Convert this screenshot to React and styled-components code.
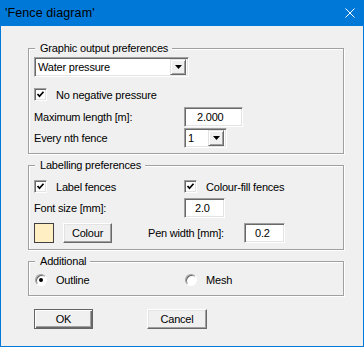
import React from "react";
import styled, { createGlobalStyle } from "styled-components";

const GlobalStyle = createGlobalStyle`
  html, body {
    margin: 0;
    padding: 0;
    background: #f0f0f0;
  }
  body {
    font-family: "Liberation Sans", Arial, sans-serif;
    font-size: 11px;
    letter-spacing: -0.2px;
    color: #000;
  }
`;

const Window = styled.div`
  box-sizing: border-box;
  width: 364px;
  height: 347px;
  background: #f0f0f0;
  border: 1px solid #0078d7;
  border-top: none;
  display: flex;
  flex-direction: column;
`;

const TitleBar = styled.div`
  height: 26px;
  flex: none;
  background: #0078d7;
  display: flex;
  align-items: center;
  justify-content: space-between;
  padding: 0 8px 0 4px;
`;

const Title = styled.span`
  font-size: 12.5px;
  letter-spacing: 0.1px;
  color: #000;
`;

const Body = styled.div`
  padding: 22px 19px 0 27px;
  display: flex;
  flex-direction: column;
`;

const Group = styled.section`
  border: 1px solid #a0a0a0;
  box-shadow: 1px 1px 0 #fff, inset 1px 1px 0 #fff;
  padding: 0 5px ${(p) => p.$pb}px;
  margin-top: ${(p) => p.$mt || 0}px;
  display: flex;
  flex-direction: column;
`;

const Caption = styled.div`
  width: fit-content;
  height: 13px;
  line-height: 13px;
  margin: -7px 0 0 1px;
  padding: 0 4px 0 5px;
  background: #f0f0f0;
`;

const Combo = styled.div`
  box-sizing: border-box;
  width: ${(p) => p.$w}px;
  height: 20px;
  margin-top: ${(p) => p.$mt || 0}px;
  background: #fff;
  border: 1px solid;
  border-color: #a0a0a0 #fff #fff #a0a0a0;
  box-shadow: inset 1px 1px 0 #696969, inset -1px -1px 0 #e3e3e3;
  padding: 2px 2px 2px 3px;
  display: flex;
  align-items: center;
  justify-content: space-between;
`;

const DropButton = styled.div`
  box-sizing: border-box;
  width: 16px;
  height: 16px;
  background: #f0f0f0;
  border: 1px solid;
  border-color: #e3e3e3 #696969 #696969 #e3e3e3;
  box-shadow: inset 1px 1px 0 #fff, inset -1px -1px 0 #a0a0a0;
  display: flex;
  align-items: center;
  justify-content: center;
`;

const Row = styled.div`
  display: grid;
  grid-template-columns: 150px auto;
  align-items: center;
  height: ${(p) => p.$h}px;
  margin-top: ${(p) => p.$mt}px;
`;

const Check = styled.label`
  display: flex;
  align-items: center;
  gap: 9px;
`;

const Box = styled.span`
  box-sizing: border-box;
  width: 13px;
  height: 13px;
  background: #fff;
  border: 1px solid;
  border-color: #a0a0a0 #fff #fff #a0a0a0;
  box-shadow: inset 1px 1px 0 #696969, inset -1px -1px 0 #e3e3e3;
  display: flex;
  align-items: center;
  justify-content: center;
`;

const Radio = styled.span`
  box-sizing: border-box;
  width: 12px;
  height: 12px;
  margin-left: 1px;
  border-radius: 50%;
  background: #fff;
  border: 1px solid;
  border-color: #a0a0a0 #fff #fff #a0a0a0;
  box-shadow: inset 1px 1px 0 #696969;
  display: flex;
  align-items: center;
  justify-content: center;
  &::after {
    content: "";
    width: 4px;
    height: 4px;
    border-radius: 50%;
    background: ${(p) => (p.$on ? "#000" : "transparent")};
  }
`;

const Input = styled.div`
  box-sizing: border-box;
  width: ${(p) => p.$w}px;
  height: 20px;
  background: #fff;
  border: 1px solid;
  border-color: #a0a0a0 #fff #fff #a0a0a0;
  box-shadow: inset 1px 1px 0 #696969, inset -1px -1px 0 #e3e3e3;
  padding-left: ${(p) => p.$pl || 10}px;
  display: flex;
  align-items: center;
`;

const ColourRow = styled.div`
  display: flex;
  align-items: center;
  height: 20px;
  margin-top: 5px;
`;

const Swatch = styled.span`
  box-sizing: border-box;
  width: 20px;
  height: 20px;
  background: #ffefc2;
  border: 1px solid #404040;
  margin-right: 9px;
`;

const PenLabel = styled.span`
  width: 96px;
  margin-left: 36px;
`;

const Button = styled.button`
  box-sizing: border-box;
  width: ${(p) => p.$w}px;
  height: 20px;
  padding: 0;
  font: inherit;
  letter-spacing: inherit;
  color: #000;
  background: #f0f0f0;
  border: 1px solid;
  border-color: ${(p) =>
    p.$default ? "#646464" : "#fff #696969 #696969 #fff"};
  box-shadow: ${(p) =>
    p.$default
      ? "inset 1px 1px 0 #fff, inset -1px -1px 0 #696969, inset -2px -2px 0 #a0a0a0"
      : "inset -1px -1px 0 #a0a0a0, inset 1px 1px 0 #e3e3e3"};
`;

const Buttons = styled.div`
  display: flex;
  gap: 54px;
  margin: 13px 0 0 6px;
`;

const Arrow = () => (
  <svg width="7" height="4" viewBox="0 0 7 4">
    <polygon points="0,0 7,0 3.5,4" fill="#000" />
  </svg>
);

const Tick = () => (
  <svg width="9" height="9" viewBox="0 0 9 9">
    <polyline
      points="1.5,4 3.5,6.3 7.5,1.8"
      fill="none"
      stroke="#000"
      strokeWidth="1.7"
    />
  </svg>
);

const CloseIcon = () => (
  <svg width="10" height="10" viewBox="0 0 10 10">
    <path d="M0.5 0.5L9.5 9.5M9.5 0.5L0.5 9.5" stroke="#fff" strokeWidth="1" />
  </svg>
);

export default function App() {
  return (
    <>
      <GlobalStyle />
      <Window>
        <TitleBar>
          <Title>'Fence diagram'</Title>
          <CloseIcon />
        </TitleBar>
        <Body>
          <Group $pb={5}>
            <Caption>Graphic output preferences</Caption>
            <Combo $w={155} $mt={2}>
              <span>Water pressure</span>
              <DropButton>
                <Arrow />
              </DropButton>
            </Combo>
            <Row $h={13} $mt={11}>
              <Check>
                <Box>
                  <Tick />
                </Box>
                No negative pressure
              </Check>
            </Row>
            <Row $h={20} $mt={6}>
              <span>Maximum length [m]:</span>
              <Input $w={59} $pl={12}>2.000</Input>
            </Row>
            <Row $h={20} $mt={1}>
              <span>Every nth fence</span>
              <Combo $w={43}>
                <span>1</span>
                <DropButton>
                  <Arrow />
                </DropButton>
              </Combo>
            </Row>
          </Group>

          <Group $mt={11} $pb={6}>
            <Caption>Labelling preferences</Caption>
            <Row $h={13} $mt={8}>
              <Check>
                <Box>
                  <Tick />
                </Box>
                Label fences
              </Check>
              <Check>
                <Box>
                  <Tick />
                </Box>
                Colour-fill fences
              </Check>
            </Row>
            <Row $h={20} $mt={5}>
              <span>Font size [mm]:</span>
              <Input $w={41}>2.0</Input>
            </Row>
            <ColourRow>
              <Swatch />
              <Button $w={49}>Colour</Button>
              <PenLabel>Pen width [mm]:</PenLabel>
              <Input $w={41}>0.2</Input>
            </ColourRow>
          </Group>

          <Group $mt={11} $pb={9}>
            <Caption>Additional</Caption>
            <Row $h={13} $mt={5}>
              <Check>
                <Radio $on />
                Outline
              </Check>
              <Check>
                <Radio />
                Mesh
              </Check>
            </Row>
          </Group>

          <Buttons>
            <Button $w={59} $default>
              OK
            </Button>
            <Button $w={60}>Cancel</Button>
          </Buttons>
        </Body>
      </Window>
    </>
  );
}
